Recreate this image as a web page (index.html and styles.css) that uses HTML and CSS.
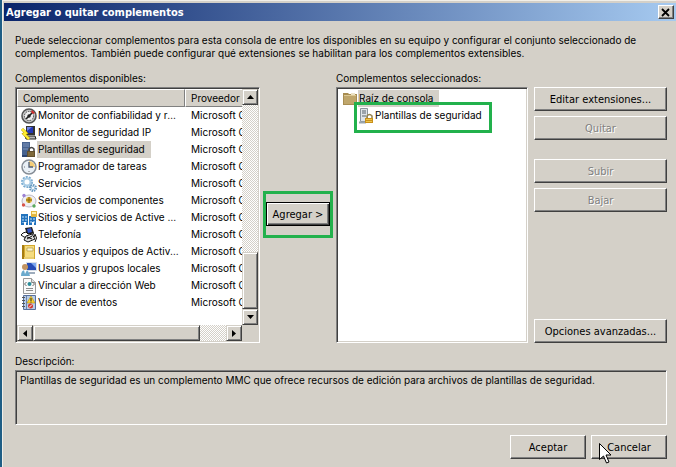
FILE: index.html
```html
<!DOCTYPE html>
<html lang="es">
<head>
<meta charset="utf-8">
<title>Agregar o quitar complementos</title>
<link rel="stylesheet" href="styles.css">
</head>
<body>
<main class="dialog">
  <header class="titlebar">
    <h1>Agregar o quitar complementos</h1>
    <button class="close" type="button" aria-label="Cerrar"><svg width="10" height="9" viewBox="0 0 10 9"><path d="M1 1l7 7M8 1L1 8" stroke="#000" stroke-width="1.8"/></svg></button>
  </header>
  <div class="content">
    <p class="intro">Puede seleccionar complementos para esta consola de entre los disponibles en su equipo y configurar el conjunto seleccionado de complementos. También puede configurar qué extensiones se habilitan para los complementos extensibles.</p>
    <div class="columns">
      <section class="pane">
        <h2>Complementos disponibles:</h2>
        <div class="sunken list">
          <div class="rows">
            <table>
              <thead><tr><th class="name">Complemento</th><th>Proveedor</th></tr></thead>
              <tbody>
                <tr><td><div class="cell"><svg viewBox="0 0 16 16"><circle cx="8" cy="8" r="7" fill="#c8c8c8" stroke="#555" stroke-width="1.6"/><circle cx="8" cy="8" r="4.6" fill="#eee" stroke="#444" stroke-dasharray="1.5 1"/><path d="M5 11l6-6" stroke="#222" stroke-width="1.6"/><circle cx="8" cy="8" r="1.7" fill="#222"/><path d="M11 2l3 3-2 1-2-2z" fill="#d32b2b"/></svg><span>Monitor de confiabilidad y rendimiento</span></div></td><td>Microsoft Corporation</td></tr>
                <tr><td><div class="cell"><svg viewBox="0 0 16 16"><path d="M5 1h9v9H5z" fill="#333"/><path d="M6 2h6v6H6z" fill="#2337b8"/><path d="M6 2h5L6 6z" fill="#7186e0"/><path d="M4 11h10l1 3H5z" fill="#bbb" stroke="#222"/><path d="M1 4l4 4-2 1 5 5" fill="none" stroke="#b79b00" stroke-width="3"/><path d="M1 4l4 4-2 1 5 5" fill="none" stroke="#ffee32" stroke-width="2"/></svg><span>Monitor de seguridad IP</span></div></td><td>Microsoft Corporation</td></tr>
                <tr class="selected"><td><div class="cell"><svg viewBox="0 0 16 16"><path d="M1 0h8v14H1z" fill="#46628f"/><path d="M2 2h6M2 4h6M2 7h6" stroke="#7f95bd"/><path d="M1 14h9" stroke="#2c436d" stroke-width="2"/><path d="M8 9V7q2.500-3 5 0v2" fill="none" stroke="#444" stroke-width="1.5"/><path d="M6 9h8v6H6z" fill="#62502f"/><path d="M7 11h6M7 13h6" stroke="#9b8247"/></svg><span>Plantillas de seguridad</span></div></td><td>Microsoft Corporation</td></tr>
                <tr><td><div class="cell"><svg viewBox="0 0 16 16"><circle cx="8" cy="8" r="7" fill="#e9f0f6" stroke="#858d96" stroke-width="1.5"/><path d="M8 8V2a6 6 0 0 1 6 6z" fill="#f4cd78"/><path d="M8 3v5h4" fill="none" stroke="#4f5d78" stroke-width="1.3"/><path d="M3 8h1M8 12v1" stroke="#777"/></svg><span>Programador de tareas</span></div></td><td>Microsoft Corporation</td></tr>
                <tr><td><div class="cell"><svg viewBox="0 0 16 16"><circle cx="6" cy="6" r="5" fill="none" stroke="#79abd0" stroke-width="2" stroke-dasharray="2 1.100"/><circle cx="6" cy="6" r="3.500" fill="#fff" stroke="#a9cce5" stroke-width="2"/><circle cx="12" cy="12" r="3" fill="none" stroke="#6799bf" stroke-width="2" stroke-dasharray="1.500 .8"/><circle cx="12" cy="12" r="1.600" fill="#fff" stroke="#9cc1db"/></svg><span>Servicios</span></div></td><td>Microsoft Corporation</td></tr>
                <tr><td><div class="cell"><svg viewBox="0 0 16 16"><ellipse cx="8" cy="8" rx="7" ry="6" fill="#f0eff3" stroke="#bbb9c4"/><circle cx="8" cy="7" r="3" fill="#dfb332"/><path d="M8 4v6M5 7h6" stroke="#856313"/><circle cx="3" cy="2.500" r="1.700" fill="#9d82d4"/><circle cx="2.500" cy="12" r="1.700" fill="#d9534a"/><circle cx="13" cy="13" r="1.700" fill="#59aa5c"/></svg><span>Servicios de componentes</span></div></td><td>Microsoft Corporation</td></tr>
                <tr><td><div class="cell"><svg viewBox="0 0 16 16"><path d="M0 4h7v11H0zM8 6h7v9H8z" fill="#2373bd"/><path d="M2 6v7M5 6v7M10 8v5M13 8v5" stroke="#c8e5fa" stroke-dasharray="2 1"/><path d="M3 12h2v3H3zM11 12h2v3h-2z" fill="#fff"/><path d="M10 1h6v6h-6z" fill="#e3b741"/><path d="M11 2h4v2h-4z" fill="#fff0b0"/></svg><span>Sitios y servicios de Active Directory</span></div></td><td>Microsoft Corporation</td></tr>
                <tr><td><div class="cell"><svg viewBox="0 0 16 16"><path d="M4 1l7-1 2 6-7 2z" fill="#222"/><path d="M6 2l4-1 1 4-4 1z" fill="#3153c9"/><path d="M2 6l3-1 2 2 5-1 2 3-2 1-2-1-3 2-4-1-3-2z" fill="#fff" stroke="#111"/><path d="M5 9l6-2 3 5-7 3-4-2z" fill="#ddd" stroke="#111"/><path d="M6 10l5 2M6 12l5-3" stroke="#111"/><path d="M14 7q3 4 0 8" fill="none" stroke="#111"/></svg><span>Telefonía</span></div></td><td>Microsoft Corporation</td></tr>
                <tr><td><div class="cell"><svg viewBox="0 0 16 16"><path d="M2 1h12v14H2z" fill="#d4a82d"/><path d="M4 2h9v11H4z" fill="#f5dc80"/><path d="M6 4h6v3H6z" fill="#fff7d0" stroke="#a38a38" stroke-width=".6"/><path d="M3 14h10" stroke="#fff4b6"/><path d="M2 1v14" stroke="#a67c12" stroke-width="2"/></svg><span>Usuarios y equipos de Active Directory</span></div></td><td>Microsoft Corporation</td></tr>
                <tr><td><div class="cell"><svg viewBox="0 0 16 16"><path d="M5 1h11v9H5z" fill="#d7dee8"/><path d="M6 2h9v7H6z" fill="#254bb5"/><path d="M10 2h5v5z" fill="#7ca7ef"/><path d="M8 11h6v2H8z" fill="#9eacbc"/><circle cx="4" cy="6" r="3" fill="#c39460"/><path d="M0 15q0-6 4-6t5 6z" fill="#6baacd"/><path d="M3 9l1 4 2-4z" fill="#fff"/></svg><span>Usuarios y grupos locales</span></div></td><td>Microsoft Corporation</td></tr>
                <tr><td><div class="cell"><svg viewBox="0 0 16 16"><path d="M2.500 .5h8l4 4v11h-12z" fill="#fafafa" stroke="#999"/><path d="M10.500 .5v4h4" fill="#ddd" stroke="#999"/><circle cx="8.500" cy="6" r="2" fill="#2b8c99"/><path d="M5.500 4l-2 2 2 2M11.500 4l2 2-2 2" fill="none" stroke="#666"/><path d="M5 10.500h7M5 12.500h7" stroke="#8d8d8d"/></svg><span>Vincular a dirección Web</span></div></td><td>Microsoft Corporation</td></tr>
                <tr><td><div class="cell"><svg viewBox="0 0 16 16"><path d="M2.500 .5h12v14h-12z" fill="#b8cde8" stroke="#58709c"/><path d="M5.500 1v13" stroke="#6b83ae"/><path d="M1 2.500h3M1 5.500h3M1 8.500h3M1 11.500h3" stroke="#555"/><path d="M10 1l4 7H6z" fill="#ffd52e" stroke="#b38b12" stroke-width=".6"/><path d="M10 3v3M10 6.500v1" stroke="#222"/><circle cx="9.500" cy="11" r="2.500" fill="#d33b33"/><path d="M8 12.500l3-3" stroke="#fff"/></svg><span>Visor de eventos</span></div></td><td>Microsoft Corporation</td></tr>
              </tbody>
            </table>
          </div>
          <div class="track vertical">
            <button class="arrow" type="button" aria-label="Desplazar arriba"><svg width="7" height="4" viewBox="0 0 7 4"><path d="M0 4l3.500-4L7 4z"/></svg></button>
            <div class="thumb"></div>
            <button class="arrow" type="button" aria-label="Desplazar abajo"><svg width="7" height="4" viewBox="0 0 7 4"><path d="M0 0l3.500 4L7 0z"/></svg></button>
          </div>
          <div class="track horizontal">
            <button class="arrow" type="button" aria-label="Desplazar a la izquierda"><svg width="4" height="7" viewBox="0 0 4 7"><path d="M4 0L0 3.500 4 7z"/></svg></button>
            <div class="thumb"></div>
            <button class="arrow" type="button" aria-label="Desplazar a la derecha"><svg width="4" height="7" viewBox="0 0 4 7"><path d="M0 0l4 3.500L0 7z"/></svg></button>
          </div>
          <div class="corner"></div>
        </div>
      </section>
      <div class="transfer"><div class="highlight"><button class="button default" type="button">Agregar &gt;</button></div></div>
      <section class="pane">
        <h2>Complementos seleccionados:</h2>
        <div class="sunken tree">
          <ul>
            <li><span class="node root"><svg viewBox="0 0 16 16"><path d="M1 2h5l1 1h8v11H1z" fill="#a88d52"/><path d="M2 4h12v9H2z" fill="#bfa66c"/><path d="M2 4.500h12" stroke="#dcc995"/><path d="M9 2h4v2H9z" fill="#ece3c8"/></svg><span>Raíz de consola</span></span>
              <ul>
                <li><span class="node"><svg viewBox="0 0 16 16"><path d="M2.500 .5h7v13h-7z" fill="#dfe4e8" stroke="#8b949c"/><path d="M4 3h4M4 5h4M4 8h4" stroke="#59636d"/><path d="M1 14.500h7" stroke="#9aa5ae" stroke-width="2"/><path d="M9 10V8q2.500-3 5 0v2" fill="none" stroke="#95834f" stroke-width="1.500"/><path d="M7 10h8v5H7z" fill="#c9901a"/><path d="M8 11.500h6M8 13.500h6" stroke="#efc64c"/></svg><span>Plantillas de seguridad</span></span></li>
              </ul>
            </li>
          </ul>
          <div class="marker"></div>
        </div>
      </section>
      <div class="actions">
        <button class="button" type="button">Editar extensiones...</button>
        <button class="button" type="button" disabled>Quitar</button>
        <button class="button spaced" type="button" disabled>Subir</button>
        <button class="button" type="button" disabled>Bajar</button>
        <button class="button last" type="button">Opciones avanzadas...</button>
      </div>
    </div>
    <label class="caption" for="description">Descripción:</label>
    <textarea id="description" class="sunken" readonly>Plantillas de seguridad es un complemento MMC que ofrece recursos de edición para archivos de plantillas de seguridad.</textarea>
    <footer>
      <button class="button" type="button">Aceptar</button>
      <button class="button" type="button">Cancelar
        <svg class="cursor" width="13" height="21" viewBox="0 0 13 21"><path d="M.5 .5v16l4-3.500 3 7 2.500-1-3-7h5z" fill="#fff" stroke="#000"/></svg>
      </button>
    </footer>
  </div>
</main>
</body>
</html>
```
FILE: styles.css
```css
* { box-sizing: border-box; }

body {
  margin: 0;
  min-height: 100vh;
  display: flex;
  background: #d4d0c8;
  color: #000;
  font: 10px/13px Inter, sans-serif;
}

h1, h2, p, ul { margin: 0; padding: 0; font-size: inherit; font-weight: normal; }
ul { list-style: none; }
svg { display: block; flex: none; }
button, textarea { font: inherit; color: inherit; }

.dialog {
  flex: 1;
  min-width: 0;
  border-left: 2px solid #1f5e85;
  box-shadow: inset 1px 1px #f1efe9;
  padding: 3px 0 0 2px;
}

.titlebar {
  display: flex;
  align-items: center;
  justify-content: space-between;
  height: 18px;
  padding: 0 2px;
  background: linear-gradient(to right, #0a246a, #a6caf0);
}
.titlebar h1 { color: #fff; font: bold 11px/13px "DejaVu Sans Condensed", sans-serif; }

.close {
  display: grid;
  place-items: center;
  width: 16px;
  height: 14px;
  padding: 0;
  border: 1px solid;
  border-color: #fff #404040 #404040 #fff;
  background: #d4d0c8;
  box-shadow: inset -1px -1px #808080;
}

.content { padding: 13px 9px 8px 11px; }
.intro { height: 26px; padding-right: 24px; }

.columns {
  display: grid;
  grid-template-columns: minmax(0, 245fr) 76px minmax(0, 192fr) 139px;
  margin-top: 12px;
}
.pane h2 { height: 15px; }

.sunken {
  border: 1px solid;
  border-color: #808080 #fff #fff #808080;
  box-shadow: inset 1px 1px #404040, inset -1px -1px #d4d0c8;
}

.list {
  display: grid;
  grid-template: minmax(0, 1fr) 16px / minmax(0, 1fr) 16px;
  height: 256px;
  padding: 1px;
  background: #fff;
}
.rows { overflow: hidden; }

table { width: 280px; table-layout: fixed; border-collapse: separate; border-spacing: 0; }
th {
  height: 18px;
  padding: 0 5px;
  font-weight: normal;
  text-align: left;
  background: #d4d0c8;
  border: 1px solid;
  border-color: #fff #808080 #808080 #fff;
}
th.name { width: 168px; }
td { height: 17px; padding: 0 6px; white-space: nowrap; }
td:first-child { padding: 0 0 0 4px; }
.cell { display: flex; align-items: center; }
.cell svg, .node svg { width: 16px; height: 16px; }
.cell span {
  padding: 2px 6px 2px 1px;
  overflow: hidden;
  text-overflow: ellipsis;
}
.selected .cell span { background: #d4d0c8; }

.track { display: flex; background: repeating-conic-gradient(#d4d0c8 0 25%, #fff 0 50%) 0 0 / 2px 2px; }
.vertical { flex-direction: column; grid-area: 1 / 2; }
.horizontal { grid-area: 2 / 1; }
.corner { grid-area: 2 / 2; background: #d4d0c8; }
.arrow, .thumb {
  border: 1px solid;
  border-color: #d4d0c8 #404040 #404040 #d4d0c8;
  background: #d4d0c8;
  box-shadow: inset 1px 1px #fff, inset -1px -1px #808080;
}
.arrow { display: grid; place-items: center; flex: none; width: 16px; height: 16px; padding: 0; }
.vertical .thumb { height: 57px; margin-top: auto; }
.horizontal .thumb { flex: 0 0 74%; margin-right: auto; }

.transfer { display: flex; justify-content: center; align-items: flex-start; padding-top: 119px; }
.highlight { width: 70px; height: 47px; padding: 8px 0; border: 3px solid #22b14c; }
.highlight .button { width: 100%; }

.button {
  position: relative;
  height: 24px;
  padding: 0 4px;
  border: 1px solid;
  border-color: #fff #404040 #404040 #fff;
  background: #d4d0c8;
  box-shadow: inset -1px -1px #808080;
  font: 11px/13px "DejaVu Sans Condensed", sans-serif;
}
.button:disabled { color: #808080; text-shadow: 1px 1px #fff; }
.button.default { padding: 0; border-color: #000; box-shadow: inset 1px 1px #fff, inset -1px -1px #404040, inset -2px -2px #808080; }

.tree { position: relative; height: 256px; padding: 2px 5px; background: #fff; }
.tree ul ul { padding-left: 16px; }
.node { display: inline-flex; align-items: center; height: 17px; vertical-align: top; }
.node > span { padding: 2px 6px 2px 1px; }
.root > span { background: #d4d0c8; }
.marker {
  position: absolute;
  top: 14px;
  left: 17px;
  width: 138px;
  height: 31px;
  border: 3px solid #22b14c;
}

.actions { display: flex; flex-direction: column; gap: 5px; padding: 15px 0 0 6px; }
.actions .spaced { margin-top: 14px; }
.actions .last { margin-top: auto; }

.caption { display: block; margin-top: 12px; height: 15px; }
textarea {
  display: block;
  width: 100%;
  height: 55px;
  padding: 3px 4px;
  resize: none;
  border-radius: 0;
  background: #d4d0c8;
}

footer { display: flex; justify-content: flex-end; gap: 5px; margin-top: 10px; }
footer .button { width: 76px; }
.cursor { position: absolute; left: 7px; top: 7px; }
```
